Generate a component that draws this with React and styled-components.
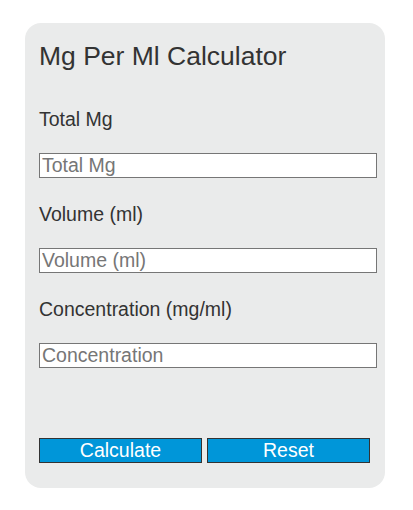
import React from 'react'
import styled, { createGlobalStyle } from 'styled-components'

const GlobalStyle = createGlobalStyle`
  body {
    margin: 0;
    background: #ffffff;
    font-family: 'Liberation Sans', Arial, sans-serif;
  }
`

const Card = styled.div`
  box-sizing: border-box;
  width: 360px;
  height: 465px;
  margin: 23px 0 0 25px;
  padding: 17px 8px 25px 14px;
  background: #eaebeb;
  border-radius: 16px;
  color: #333333;
  display: flex;
  flex-direction: column;
`

const Title = styled.h1`
  margin: 0 0 35px;
  font-size: 26.5px;
  line-height: 32px;
  font-weight: 400;
`

const Field = styled.div`
  display: flex;
  flex-direction: column;
  margin-bottom: 24px;
`

const Label = styled.label`
  font-size: 19.5px;
  line-height: 24px;
  margin-bottom: 22px;
`

const Input = styled.input`
  box-sizing: border-box;
  width: 338px;
  height: 25px;
  margin: 0;
  padding: 0 2px;
  border: 1px solid #767676;
  background: #ffffff;
  font-family: 'Liberation Sans', Arial, sans-serif;
  font-size: 19.5px;
  color: #333333;
  outline: none;

  &::placeholder {
    color: #767676;
    opacity: 1;
  }
`

const Buttons = styled.div`
  display: flex;
  gap: 5px;
  margin-top: 46px;
`

const Button = styled.button`
  box-sizing: border-box;
  width: 163px;
  height: 25px;
  margin: 0;
  padding: 0;
  border: 1px solid #333333;
  background: #0096d9;
  color: #ffffff;
  font-family: 'Liberation Sans', Arial, sans-serif;
  font-size: 19.5px;
  line-height: 23px;
  cursor: pointer;
`

const fields = [
  { label: 'Total Mg', placeholder: 'Total Mg' },
  { label: 'Volume (ml)', placeholder: 'Volume (ml)' },
  { label: 'Concentration (mg/ml)', placeholder: 'Concentration' },
]

const App = () => {
  return (
    <>
      <GlobalStyle />
      <Card>
        <Title>Mg Per Ml Calculator</Title>
        {fields.map(({ label, placeholder }) => (
          <Field key={label}>
            <Label>{label}</Label>
            <Input type="text" placeholder={placeholder} />
          </Field>
        ))}
        <Buttons>
          <Button type="button">Calculate</Button>
          <Button type="button">Reset</Button>
        </Buttons>
      </Card>
    </>
  )
}

export default App
